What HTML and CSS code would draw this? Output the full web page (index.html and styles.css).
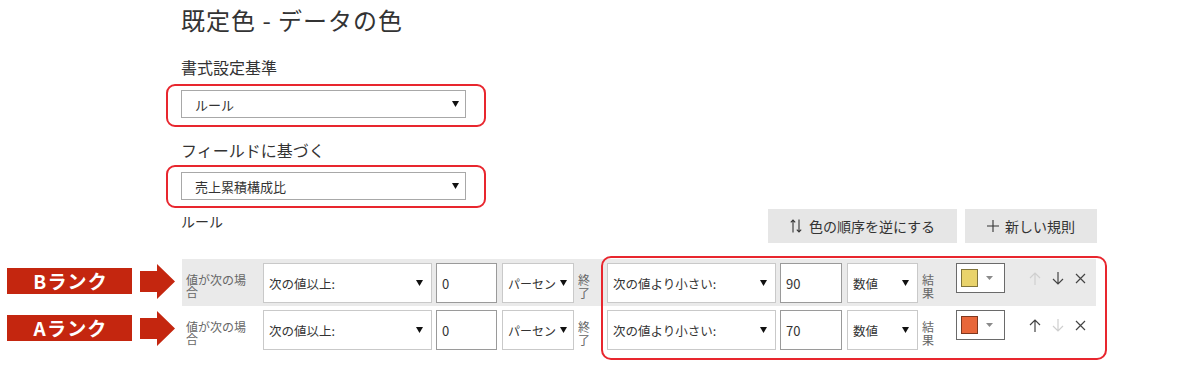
FILE: index.html
```html
<!DOCTYPE html>
<html lang="ja">
<head>
<meta charset="utf-8">
<title>既定色 - データの色</title>
<link rel="stylesheet" href="styles.css">
</head>
<body>
<div class="page">
  <section class="settings">
    <h1 class="title">既定色 - データの色</h1>
    <div class="field-label first">書式設定基準</div>
    <div class="highlight">
      <div class="dropdown"><span>ルール</span><svg class="caret" width="7" height="6" viewBox="0 0 7 6"><path d="M0 0h7L3.5 6z"/></svg></div>
    </div>
    <div class="field-label">フィールドに基づく</div>
    <div class="highlight second">
      <div class="dropdown"><span>売上累積構成比</span><svg class="caret" width="7" height="6" viewBox="0 0 7 6"><path d="M0 0h7L3.5 6z"/></svg></div>
    </div>
    <div class="rules-head">
      <div class="rules-label">ルール</div>
      <div class="actions">
        <button class="btn btn-reverse"><svg class="btn-icon" width="12" height="14" viewBox="0 0 12 14"><path d="M3 13.5V1M0.8 3.4L3 1L5.2 3.4M9 0.5V13M6.8 10.6L9 13L11.2 10.6"/></svg><span>色の順序を逆にする</span></button>
        <button class="btn btn-new"><svg class="btn-icon" width="12" height="12" viewBox="0 0 12 12"><path d="M6 0V12M0 6H12"/></svg><span>新しい規則</span></button>
      </div>
    </div>
  </section>

  <section class="rules">
    <div class="rule-line">
      <div class="annot">
        <div class="rank">Bランク</div>
        <svg class="pointer" width="35" height="35" viewBox="0 0 35 35"><polygon points="0,7 17,7 17,0 35,17.5 17,35 17,28 0,28"/></svg>
      </div>
      <div class="rule-row shaded">
        <div class="cond-label">値が次の場合</div>
        <div class="sel w-cond"><span>次の値以上:</span><svg class="caret" width="7" height="6" viewBox="0 0 7 6"><path d="M0 0h7L3.5 6z"/></svg></div>
        <div class="num">0</div>
        <div class="sel w-unit"><span>パーセン</span><svg class="caret" width="7" height="6" viewBox="0 0 7 6"><path d="M0 0h7L3.5 6z"/></svg></div>
        <div class="mini-label end">終了</div>
        <div class="sel w-cond"><span>次の値より小さい:</span><svg class="caret" width="7" height="6" viewBox="0 0 7 6"><path d="M0 0h7L3.5 6z"/></svg></div>
        <div class="num num2">90</div>
        <div class="sel w-unit2"><span>数値</span><svg class="caret" width="7" height="6" viewBox="0 0 7 6"><path d="M0 0h7L3.5 6z"/></svg></div>
        <div class="mini-label result">結果</div>
        <div class="picker"><span class="swatch yellow"></span><svg class="pick-caret" width="7" height="4" viewBox="0 0 7 4"><path d="M0 0h7L3.5 4z"/></svg></div>
        <div class="icons">
          <span class="icon-btn off"><svg width="12" height="13" viewBox="0 0 12 13"><path d="M6 1V13M1 6L6 1L11 6"/></svg></span>
          <span class="icon-btn"><svg width="12" height="13" viewBox="0 0 12 13"><path d="M6 0V12M1 7L6 12L11 7"/></svg></span>
          <span class="icon-btn"><svg width="11" height="11" viewBox="0 0 11 11"><path d="M1 1L10 10M10 1L1 10"/></svg></span>
        </div>
      </div>
    </div>

    <div class="rule-line">
      <div class="annot">
        <div class="rank">Aランク</div>
        <svg class="pointer" width="35" height="35" viewBox="0 0 35 35"><polygon points="0,7 17,7 17,0 35,17.5 17,35 17,28 0,28"/></svg>
      </div>
      <div class="rule-row">
        <div class="cond-label">値が次の場合</div>
        <div class="sel w-cond"><span>次の値以上:</span><svg class="caret" width="7" height="6" viewBox="0 0 7 6"><path d="M0 0h7L3.5 6z"/></svg></div>
        <div class="num">0</div>
        <div class="sel w-unit"><span>パーセン</span><svg class="caret" width="7" height="6" viewBox="0 0 7 6"><path d="M0 0h7L3.5 6z"/></svg></div>
        <div class="mini-label end">終了</div>
        <div class="sel w-cond"><span>次の値より小さい:</span><svg class="caret" width="7" height="6" viewBox="0 0 7 6"><path d="M0 0h7L3.5 6z"/></svg></div>
        <div class="num num2">70</div>
        <div class="sel w-unit2"><span>数値</span><svg class="caret" width="7" height="6" viewBox="0 0 7 6"><path d="M0 0h7L3.5 6z"/></svg></div>
        <div class="mini-label result">結果</div>
        <div class="picker"><span class="swatch orange"></span><svg class="pick-caret" width="7" height="4" viewBox="0 0 7 4"><path d="M0 0h7L3.5 4z"/></svg></div>
        <div class="icons">
          <span class="icon-btn"><svg width="12" height="13" viewBox="0 0 12 13"><path d="M6 1V13M1 6L6 1L11 6"/></svg></span>
          <span class="icon-btn off"><svg width="12" height="13" viewBox="0 0 12 13"><path d="M6 0V12M1 7L6 12L11 7"/></svg></span>
          <span class="icon-btn"><svg width="11" height="11" viewBox="0 0 11 11"><path d="M1 1L10 10M10 1L1 10"/></svg></span>
        </div>
      </div>
    </div>

    <div class="focus-box"></div>
  </section>
</div>
</body>
</html>
```

FILE: styles.css
```css
html, body {
  margin: 0;
  padding: 0;
  background: #ffffff;
}

body {
  font-family: "Noto Sans CJK JP", "Noto Sans", sans-serif;
  color: #333333;
}

.page {
  padding-bottom: 30px;
}

.settings {
  margin-left: 181px;
  width: 916px;
  padding-top: 4px;
}

.title {
  margin: 0;
  font-size: 24px;
  line-height: 32px;
  font-weight: 400;
  letter-spacing: 1px;
  color: #333333;
}

.field-label {
  font-size: 16px;
  line-height: 22px;
  margin-top: 12px;
  color: #333333;
}

.field-label.first {
  margin-top: 20px;
}

.highlight {
  margin-left: -15px;
  margin-top: 6px;
  width: 320px;
  height: 43px;
  box-sizing: border-box;
  border: 2px solid #e8262e;
  border-radius: 9px;
  padding: 4px 0 0 13px;
}

.highlight.second {
  margin-top: 4px;
  padding-top: 5px;
}

.dropdown {
  width: 285px;
  height: 28px;
  box-sizing: border-box;
  border: 1px solid #a8a8a8;
  display: flex;
  align-items: center;
  padding: 0 6px 0 13px;
  font-size: 13px;
  color: #333333;
  background: #ffffff;
}

.dropdown span {
  flex: 1;
}

.caret path {
  fill: #111111;
}

.rules-head {
  margin-top: 1px;
  display: flex;
  justify-content: space-between;
  align-items: flex-start;
}

.rules-label {
  padding-top: 2px;
  font-size: 14px;
  line-height: 20px;
  color: #333333;
}

.actions {
  display: flex;
  gap: 8px;
}

.btn {
  height: 34px;
  border: none;
  background: #e6e6e6;
  font-family: inherit;
  font-size: 14px;
  color: #333333;
  display: flex;
  align-items: center;
  justify-content: center;
  gap: 7px;
  padding: 0;
  margin: 0;
}

.btn-reverse {
  width: 189px;
}

.btn-new {
  width: 132px;
  gap: 6px;
}

.btn-icon path {
  stroke: #333333;
  stroke-width: 1.1;
  fill: none;
}

.rules {
  position: relative;
  margin-top: 16px;
}

.rule-line {
  display: flex;
  align-items: center;
}

.annot {
  width: 182px;
  display: flex;
  align-items: center;
  margin-top: -3px;
}

.rank {
  margin-left: 7px;
  width: 125px;
  height: 26px;
  background: #c4260f;
  color: #ffffff;
  font-weight: 700;
  font-size: 19px;
  line-height: 26px;
  letter-spacing: 2.5px;
  text-indent: 2px;
  font-feature-settings: "palt";
  text-align: center;
}

.pointer {
  margin-left: 8px;
}

.pointer polygon {
  fill: #c4260f;
}

.rule-row {
  display: flex;
  align-items: flex-start;
  width: 914px;
  height: 47px;
  box-sizing: border-box;
  padding-top: 4px;
}

.rule-row.shaded {
  background: #eaeaea;
}

.cond-label {
  width: 62px;
  padding-left: 4px;
  margin-right: 15px;
  align-self: center;
  font-size: 12px;
  line-height: 12px;
  color: #666666;
  margin-top: 2px;
}

.sel {
  height: 40px;
  box-sizing: border-box;
  border: 1px solid #c9c9c9;
  background: #ffffff;
  display: flex;
  align-items: center;
  padding: 0 8px 0 5px;
  font-size: 12.5px;
  color: #333333;
  margin-right: 4px;
}

.sel span {
  flex: 1;
  overflow: hidden;
  white-space: nowrap;
}

.w-cond {
  width: 169px;
}

.w-unit {
  width: 72px;
  margin-right: 0;
  padding-right: 6px;
}

.w-unit span {
  font-size: 12px;
}

.w-unit2 {
  width: 71px;
  margin-right: 0;
}

.num {
  width: 61px;
  height: 40px;
  box-sizing: border-box;
  border: 1px solid #9a9a9a;
  background: #ffffff;
  padding-left: 5px;
  font-size: 13px;
  color: #333333;
  display: flex;
  align-items: center;
  margin-right: 5px;
}

.num2 {
  width: 62px;
}

.mini-label {
  width: 13px;
  padding-left: 4px;
  align-self: center;
  font-size: 12px;
  line-height: 13px;
  color: #666666;
  margin-top: 2px;
}

.mini-label.end {
  margin-right: 16px;
}

.mini-label.result {
  margin-right: 21px;
}

.picker {
  width: 49px;
  height: 30px;
  box-sizing: border-box;
  border: 1px solid #6a6a6a;
  background: #ffffff;
  display: flex;
  align-items: center;
  padding-left: 4px;
}

.swatch {
  width: 17px;
  height: 18px;
  box-sizing: border-box;
  border: 1px solid rgba(0, 0, 0, 0.45);
}

.swatch.yellow {
  background: #e9d36b;
}

.swatch.orange {
  background: #e8673a;
}

.pick-caret {
  margin-left: 8px;
}

.pick-caret path {
  fill: #8a8a8a;
}

.icons {
  margin-left: 18px;
  display: flex;
  height: 30px;
}

.icon-btn {
  width: 23px;
  height: 30px;
  display: flex;
  align-items: center;
  justify-content: center;
}

.icon-btn path {
  stroke: #444444;
  stroke-width: 1.2;
  fill: none;
}

.icon-btn.off path {
  stroke: #cfcfcf;
}

.focus-box {
  position: absolute;
  left: 601px;
  top: -3px;
  bottom: -7px;
  width: 506px;
  box-sizing: border-box;
  border: 2px solid #e8262e;
  border-radius: 10px;
  pointer-events: none;
}
```
